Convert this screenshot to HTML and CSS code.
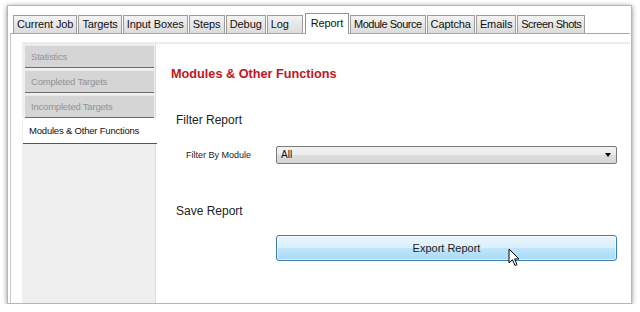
FILE: index.html
```html
<!DOCTYPE html>
<html>
<head>
<meta charset="utf-8">
<link rel="stylesheet" href="styles.css">
</head>
<body>

<div class="window">
  <ul class="tabs">
    <li>Current Job</li>
    <li>Targets</li>
    <li>Input Boxes</li>
    <li>Steps</li>
    <li>Debug</li>
    <li>Log</li>
    <li class="selected">Report</li>
    <li class="tight">Module Source</li>
    <li>Captcha</li>
    <li>Emails</li>
    <li class="tight">Screen Shots</li>
  </ul>

  <div class="tab-page">
    <div class="report">
      <div class="side">
        <div class="side-item">Statistics</div>
        <div class="side-item">Completed Targets</div>
        <div class="side-item">Incompleted Targets</div>
        <div class="side-item active">Modules &amp; Other Functions</div>
      </div>

      <div class="content">
        <h1>Modules &amp; Other Functions</h1>

        <h2 class="first">Filter Report</h2>
        <div class="field">
          <label>Filter By Module</label>
          <div class="combo">All</div>
        </div>

        <h2 class="second">Save Report</h2>
        <div class="field">
          <span></span>
          <div class="export">
            Export Report
            <svg class="cursor" width="13" height="20" viewBox="0 0 13 20">
              <path d="M1 1 L1 15 L4.5 11.8 L7 17.5 L9 16.6 L6.6 11 L11 11 Z" fill="#fff" stroke="#000" stroke-width="1" stroke-linejoin="round"/>
            </svg>
          </div>
        </div>
      </div>
    </div>
  </div>
</div>

</body>
</html>
```

FILE: styles.css
```css
* {
  box-sizing: border-box;
}

body {
  margin: 0;
  background: #fff;
  font-family: "Liberation Sans", Arial, sans-serif;
}

.window {
  margin: 5px 0 0 7px;
  width: 625px;
  height: 299px;
  border: 1px solid #b5b5b5;
  background: #fff;
  box-shadow: 0 1px 5px rgba(0, 0, 0, 0.45);
  display: flex;
  flex-direction: column;
}

/* tab strip */
.tabs {
  list-style: none;
  margin: 0;
  padding: 7px 0 0 5px;
  display: flex;
  align-items: flex-end;
  position: relative;
  z-index: 1;
}

.tabs li {
  min-width: 36px;
  height: 18px;
  padding: 0 3px;
  margin-right: 1px;
  font-size: 11px;
  letter-spacing: -0.1px;
  line-height: 17px;
  color: #111;
  background: linear-gradient(#f3f3f3, #dbdbdb);
  border: 1px solid #9c9c9c;
  border-bottom: none;
  white-space: nowrap;
}

.tabs li.tight {
  letter-spacing: -0.5px;
}

.tabs li.selected {
  height: 21px;
  margin: 0 1px -1px 1px;
  padding: 0 5px;
  line-height: 19px;
  background: #fff;
  border-color: #8e9196;
}

.tab-page {
  flex: 1;
  margin-left: 2px;
  margin-right: 1px;
  border-top: 1px solid #a6a6a6;
  border-left: 1px solid #c9c9c9;
  padding: 8px 0 0 11px;
  display: flex;
}

.report {
  flex: 1;
  display: flex;
  border-top: 2px solid #ececec;
}

/* left list */
.side {
  width: 134px;
  background: #efefef;
  border-right: 1px solid #dcdcdc;
  padding-top: 1px;
}

.side-item {
  margin: 0 0 2px 3px;
  width: 129px;
  height: 23px;
  padding-left: 6px;
  background: #d5d5d5;
  border-top: 1px solid #e9e9e9;
  border-bottom: 1px solid #6b6b6b;
  font-size: 9.5px;
  letter-spacing: -0.2px;
  line-height: 21px;
  color: #939393;
}

.side-item.active {
  margin: -2px -1px 0 1px;
  width: 134px;
  height: 26px;
  padding-left: 6px;
  background: #fff;
  border-top: none;
  border-bottom: 1px solid #555;
  color: #111;
  line-height: 25px;
}

/* right pane */
.content {
  flex: 1;
  position: relative;
}

h1 {
  margin: 22px 0 0 15px;
  font-size: 12.7px;
  line-height: 16px;
  font-weight: bold;
  color: #c0161c;
}

h2 {
  margin: 0 0 0 20px;
  font-size: 12px;
  line-height: 15px;
  font-weight: normal;
  color: #222;
}

h2.first {
  margin-top: 31px;
}

h2.second {
  margin-top: 40px;
}

.field {
  display: grid;
  grid-template-columns: 90px 341px;
  align-items: center;
  margin: 18px 0 0 30px;
}

h2.second + .field {
  margin-top: 16px;
}

.field label {
  font-size: 9px;
  color: #222;
}

.combo {
  position: relative;
  height: 18px;
  padding-left: 4px;
  border: 1px solid #7a7a7a;
  border-radius: 2px;
  background: linear-gradient(#f2f2f2 0%, #ebebeb 50%, #dddddd 51%, #d6d6d6 100%);
  font-size: 10px;
  line-height: 16px;
  color: #111;
}

.combo::after {
  content: "";
  position: absolute;
  right: 5px;
  top: 6px;
  border-left: 3.5px solid transparent;
  border-right: 3.5px solid transparent;
  border-top: 4px solid #000;
}

.export {
  position: relative;
  height: 26px;
  border: 1px solid #3c7fb1;
  border-radius: 3px;
  background: linear-gradient(#eaf6fd 0%, #d9f0fc 50%, #bee6fd 51%, #a9daf5 100%);
  box-shadow: inset 0 0 0 1px rgba(255, 255, 255, 0.6);
  text-align: center;
  font-size: 11px;
  line-height: 24px;
  color: #222;
}

.cursor {
  position: absolute;
  left: 231px;
  top: 12px;
}
```
